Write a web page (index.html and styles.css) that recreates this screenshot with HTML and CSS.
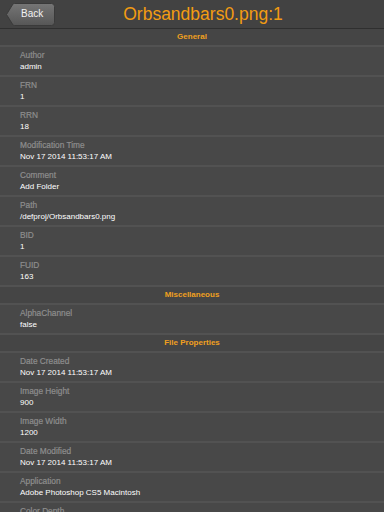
FILE: index.html
```html
<!DOCTYPE html>
<html>
<head>
<meta charset="utf-8">
<link rel="stylesheet" href="styles.css">
</head>
<body>
<div class="topbar">
  <div class="back">
    <svg class="back-shape" width="50" height="23" viewBox="0 0 50 23">
      <defs>
        <linearGradient id="bg" x1="0" y1="0" x2="0" y2="1">
          <stop offset="0" stop-color="#767676"/>
          <stop offset="1" stop-color="#565656"/>
        </linearGradient>
      </defs>
      <path d="M0.5 11.5 L7 1 Q7.5 0.5 8.5 0.5 L45.5 0.5 Q48.5 0.5 48.5 3.5 L48.5 19.5 Q48.5 22.5 45.5 22.5 L8.5 22.5 Q7.5 22.5 7 22 Z" fill="url(#bg)" stroke="#3a3a3a" stroke-width="1"/>
    </svg>
    <span class="back-text">Back</span>
  </div>
  <div class="title">Orbsandbars0.png:1</div>
</div>

<div class="section">General</div>
<div class="row"><div class="label">Author</div><div class="value">admin</div></div>
<div class="row"><div class="label">FRN</div><div class="value">1</div></div>
<div class="row"><div class="label">RRN</div><div class="value">18</div></div>
<div class="row"><div class="label">Modification Time</div><div class="value">Nov 17 2014 11:53:17 AM</div></div>
<div class="row"><div class="label">Comment</div><div class="value">Add Folder</div></div>
<div class="row"><div class="label">Path</div><div class="value">/defproj/Orbsandbars0.png</div></div>
<div class="row"><div class="label">BID</div><div class="value">1</div></div>
<div class="row"><div class="label">FUID</div><div class="value">163</div></div>

<div class="section">Miscellaneous</div>
<div class="row"><div class="label">AlphaChannel</div><div class="value">false</div></div>

<div class="section">File Properties</div>
<div class="row"><div class="label">Date Created</div><div class="value">Nov 17 2014 11:53:17 AM</div></div>
<div class="row"><div class="label">Image Height</div><div class="value">900</div></div>
<div class="row"><div class="label">Image Width</div><div class="value">1200</div></div>
<div class="row"><div class="label">Date Modified</div><div class="value">Nov 17 2014 11:53:17 AM</div></div>
<div class="row"><div class="label">Application</div><div class="value">Adobe Photoshop CS5 Macintosh</div></div>
<div class="row"><div class="label">Color Depth</div><div class="value">32</div></div>
</body>
</html>
```
FILE: styles.css
```css
html, body {
  margin: 0;
  padding: 0;
  background: #484848;
  font-family: "Liberation Sans", Arial, sans-serif;
  overflow: hidden;
}
.topbar {
  display: flex;
  align-items: center;
  height: 28px;
  background: #424242;
  border-bottom: 1px solid #2f2f2f;
  padding: 0 34px 0 6px;
}
.back {
  position: relative;
  width: 50px;
  height: 23px;
  flex: none;
  margin-top: 1px;
}
.back-shape {
  position: absolute;
  left: 0;
  top: 0;
}
.back-text {
  position: absolute;
  left: 15px;
  top: 0;
  line-height: 22px;
  font-size: 10px;
  color: #f2f2f2;
}
.title {
  flex: 1;
  text-align: center;
  color: #f39c12;
  font-size: 17.5px;
  line-height: 24px;
}
.section {
  height: 16px;
  line-height: 16px;
  text-align: center;
  font-size: 8px;
  font-weight: bold;
  color: #f0a020;
  background: #454545;
  border-bottom: 2px solid #525252;
}
.row {
  padding: 2px 20px 2px;
  border-bottom: 2px solid #525252;
}
.label {
  font-size: 8.3px;
  line-height: 12px;
  color: #8e8e8e;
  -webkit-text-stroke: 0.2px #8e8e8e;
}
.value {
  font-size: 8px;
  line-height: 12px;
  color: #ffffff;
}
```
